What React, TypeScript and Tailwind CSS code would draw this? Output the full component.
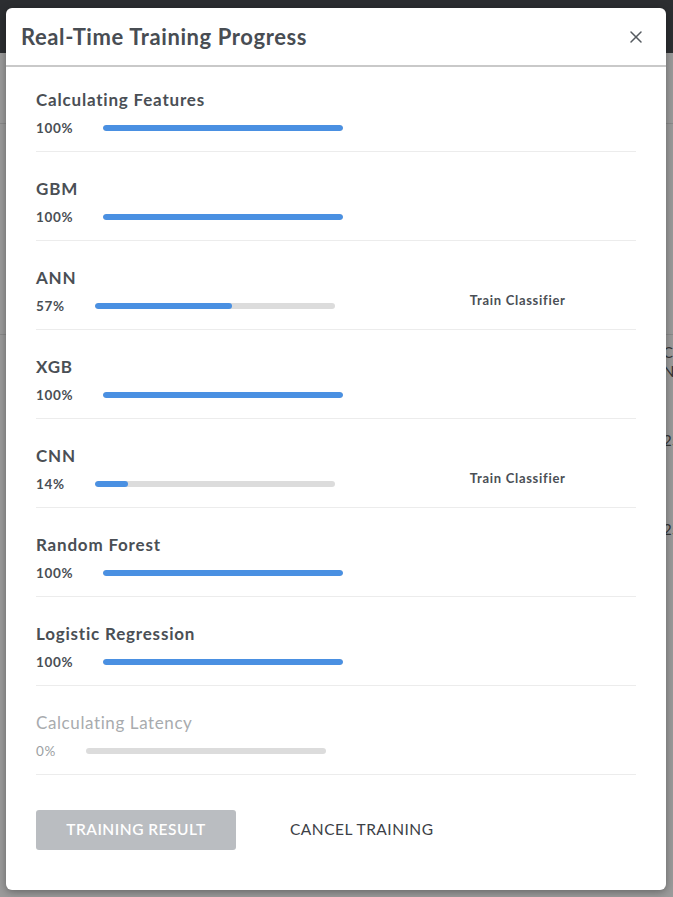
import { X } from "lucide-react";

type Step = {
    name: string;
    percent: number;
    note?: string;
    disabled?: boolean;
};

const steps: Step[] = [
    { name: "Calculating Features", percent: 100 },
    { name: "GBM", percent: 100 },
    { name: "ANN", percent: 57, note: "Train Classifier" },
    { name: "XGB", percent: 100 },
    { name: "CNN", percent: 14, note: "Train Classifier" },
    { name: "Random Forest", percent: 100 },
    { name: "Logistic Regression", percent: 100 },
    { name: "Calculating Latency", percent: 0, disabled: true },
];

function ProgressRow({ step, first }: { step: Step; first: boolean }) {
    return (
        <div className={`${first ? "pt-[22px]" : "pt-[26px]"} pb-[14px] border-b border-[#ececec]`}>
            <p
                className={`h-[22px] leading-[22px] text-[17px] ${
                    step.disabled
                        ? "font-normal text-[#a8abae] tracking-[0.6px]"
                        : "font-bold text-[#4a4f55] tracking-[0.8px]"
                }`}
            >
                {step.name}
            </p>
            <div className="flex items-center h-[18px] mt-[8px]">
                <span
                    className={`text-[13.5px] tracking-[0.7px] ${
                        step.disabled ? "font-normal text-[#9c9fa3]" : "font-bold text-[#4a4f55]"
                    }`}
                >
                    {step.percent}%
                </span>
                <div className="ml-[30px] w-[240px] h-[6px] rounded-full bg-[#dcdcdc] overflow-hidden">
                    <div className="h-full rounded-full bg-[#4a90e2]" style={{ width: `${step.percent}%` }} />
                </div>
                {step.note && (
                    <span className="ml-[135px] mb-[10px] text-[13px] tracking-[0.7px] font-bold text-[#4a4f55]">
                        {step.note}
                    </span>
                )}
            </div>
        </div>
    );
}

export default function App() {
    return (
        <div className="relative w-full h-[897px] overflow-hidden bg-[#9b9b9b] font-['Lato',sans-serif]">
            {/* page behind the overlay */}
            <div className="h-[53px] bg-[#2c2e31]" />
            <div className="h-[71px] border-b border-[#8a8a8a]" />
            <div className="h-[211px] border-b border-[#8a8a8a]" />
            <div className="flex flex-col pl-[663px] text-[15px] text-[#333] leading-[19px]">
                <span className="mt-[8px]">CN</span>
                <span>NA</span>
                <span className="mt-[50px]">25</span>
                <span className="mt-[70px]">25</span>
            </div>

            {/* modal */}
            <div className="absolute left-[6px] top-[8px] w-[660px] h-[882px] bg-white rounded-[6px] shadow-[0_2px_8px_rgba(0,0,0,0.35)] flex flex-col">
                <div className="h-[59px] flex items-center justify-between pl-[15px] pr-[20px] border-b-2 border-[#c9c9c9]">
                    <h1 className="text-[22px] tracking-[0.6px] font-bold text-[#484d53]">Real-Time Training Progress</h1>
                    <X size={20} strokeWidth={1.8} className="text-[#555a60]" />
                </div>
                <div className="px-[30px]">
                    {steps.map((step, i) => (
                        <ProgressRow key={step.name} step={step} first={i === 0} />
                    ))}
                    <div className="flex items-center mt-[35px]">
                        <button className="w-[200px] h-[40px] rounded-[3px] bg-[#babdc1] text-white text-[15.5px] tracking-[0.5px] font-semibold uppercase">
                            Training Result
                        </button>
                        <button className="ml-[54px] text-[15.5px] tracking-[0.5px] text-[#3c4046] uppercase">
                            Cancel Training
                        </button>
                    </div>
                </div>
            </div>
        </div>
    );
}
